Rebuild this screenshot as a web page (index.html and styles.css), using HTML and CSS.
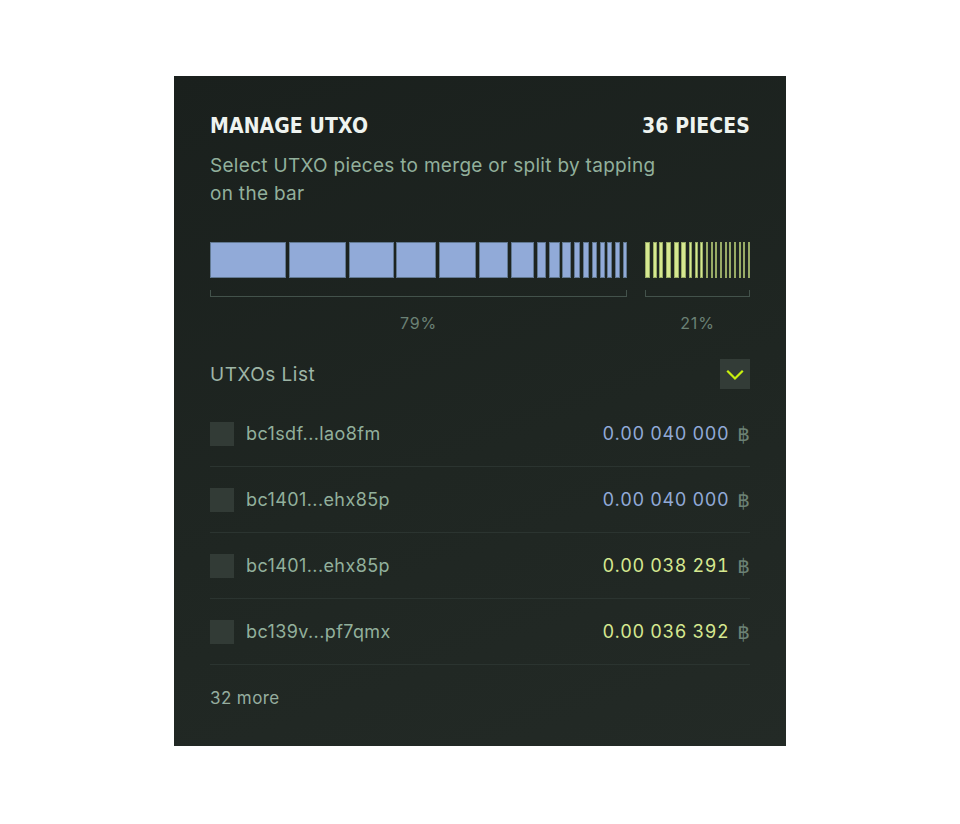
FILE: index.html
```html
<!DOCTYPE html>
<html lang="en">
<head>
  <meta charset="UTF-8" />
  <meta name="viewport" content="width=device-width, initial-scale=1.0"/>
  <title>Manage UTXO</title>
  <link rel="stylesheet" href="styles.css">
</head>
<body>

  <section class="utxo-card">

    <div class="card-head">
      <h2>Manage UTXO</h2>
      <span class="count">36 pieces</span>
    </div>
    <p class="hint">Select UTXO pieces to merge or split by tapping on the bar</p>

    <!-- Piece bar -->
    <div class="pieces">
      <div class="group group-big">
        <div class="bar" id="bigBar"></div>
        <div class="bracket"></div>
        <div class="pct">79%</div>
      </div>
      <div class="group group-small">
        <div class="bar" id="smallBar"></div>
        <div class="bracket"></div>
        <div class="pct">21%</div>
      </div>
    </div>

    <!-- List -->
    <div class="list-head">
      <span>UTXOs List</span>
      <button class="toggle" type="button">
        <svg width="30" height="30" viewBox="0 0 30 30"><polyline points="8,12.5 15,19.5 22,12.5" fill="none" stroke="#c8f00e" stroke-width="2.2" stroke-linecap="square"/></svg>
      </button>
    </div>

    <ul class="utxo-list">
      <li class="utxo">
        <span class="check"></span>
        <span class="addr">bc1sdf...lao8fm</span>
        <span class="amount blue">0.00 040 000</span>
        <span class="coin">฿</span>
      </li>
      <li class="utxo">
        <span class="check"></span>
        <span class="addr">bc1401...ehx85p</span>
        <span class="amount blue">0.00 040 000</span>
        <span class="coin">฿</span>
      </li>
      <li class="utxo">
        <span class="check"></span>
        <span class="addr">bc1401...ehx85p</span>
        <span class="amount lime">0.00 038 291</span>
        <span class="coin">฿</span>
      </li>
      <li class="utxo">
        <span class="check"></span>
        <span class="addr">bc139v...pf7qmx</span>
        <span class="amount lime">0.00 036 392</span>
        <span class="coin">฿</span>
      </li>
    </ul>

    <div class="more">32 more</div>
  </section>

  <script>
    // piece widths in px, largest first
    const big = [76, 57, 45, 40, 37, 29, 23, 9, 11, 9, 6, 6, 5, 5, 5, 5, 4];
    const small = [5, 4, 4, 5, 5, 5, 3, 3, 3, 2, 2, 2, 2, 2, 2, 2, 2, 2, 2];

    function fill(id, list) {
      const bar = document.getElementById(id);
      list.forEach(function (w) {
        const seg = document.createElement("span");
        seg.className = "seg";
        seg.style.width = w + "px";
        bar.appendChild(seg);
      });
    }

    fill("bigBar", big);
    fill("smallBar", small);
  </script>
</body>
</html>
```

FILE: styles.css
```css
:root {
  --card: #1c2320;
  --title: #eef3ef;
  --sage: #92b09c;
  --muted: #6b8175;
  --line: #2b3430;
  --blue: #91aad8;
  --lime: #d6e890;
}

body {
  margin: 0;
  background: #fff;
  font-family: 'Inter', 'Liberation Sans', sans-serif;
  letter-spacing: 0.4px;
}

.utxo-card {
  width: 612px;
  margin: 76px auto 0;
  box-sizing: border-box;
  padding: 37px 36px 36px;
  background: linear-gradient(160deg, #1a201d 0%, #1f2622 55%, #232a26 100%);
  color: var(--sage);
}

.card-head {
  display: flex;
  justify-content: space-between;
  align-items: baseline;
}

.card-head h2,
.card-head .count {
  margin: 0;
  font-family: 'DejaVu Sans Condensed', 'DejaVu Sans', sans-serif;
  font-weight: bold;
  font-size: 21px;
  line-height: 26px;
  letter-spacing: 0.1px;
  text-transform: uppercase;
  color: var(--title);
}

.hint {
  margin: 13px 0 0;
  max-width: 460px;
  font-size: 19px;
  line-height: 28px;
  letter-spacing: 0.3px;
}

/* Piece bar */
.pieces {
  display: flex;
  gap: 18px;
  margin-top: 34px;
}

.group-big { width: 417px; }
.group-small { width: 105px; }

.bar {
  display: flex;
  justify-content: space-between;
  height: 36px;
}

.seg {
  box-sizing: border-box;
  height: 100%;
  border: 1px solid rgba(60, 80, 90, 0.55);
}

.group-big .seg { background: var(--blue); }
.group-small .seg { background: var(--lime); border-color: rgba(90, 110, 60, 0.5); }

.bracket {
  height: 6px;
  margin-top: 12px;
  border: 1.5px solid #43524b;
  border-top: none;
}

.pct {
  margin-top: 16px;
  text-align: center;
  font-size: 16px;
  line-height: 20px;
  letter-spacing: 0.8px;
  color: var(--muted);
}

/* List */
.list-head {
  display: flex;
  justify-content: space-between;
  align-items: center;
  margin-top: 26px;
  font-size: 19px;
  letter-spacing: 0.5px;
  color: #9db5a6;
}

.toggle {
  width: 30px;
  height: 30px;
  padding: 0;
  border: none;
  background: #333c37;
  cursor: pointer;
}

.toggle svg { display: block; }

.utxo-list {
  list-style: none;
  margin: 12px 0 0;
  padding: 0;
}

.utxo {
  display: flex;
  align-items: center;
  height: 65px;
  border-bottom: 1px solid var(--line);
  font-size: 18px;
}

.check {
  width: 24px;
  height: 24px;
  background: #323b36;
  margin-right: 12px;
}

.addr {
  flex: 1;
  color: var(--sage);
}

.amount {
  font-variant-numeric: tabular-nums;
  letter-spacing: 0.6px;
}

.amount.blue { color: var(--blue); }
.amount.lime { color: var(--lime); }

.coin {
  margin-left: 8px;
  font-family: 'DejaVu Sans', sans-serif;
  font-size: 20px;
  letter-spacing: 0;
  color: var(--muted);
}

.more {
  margin-top: 21px;
  font-size: 17px;
  line-height: 24px;
  color: #95ad9f;
}
```
